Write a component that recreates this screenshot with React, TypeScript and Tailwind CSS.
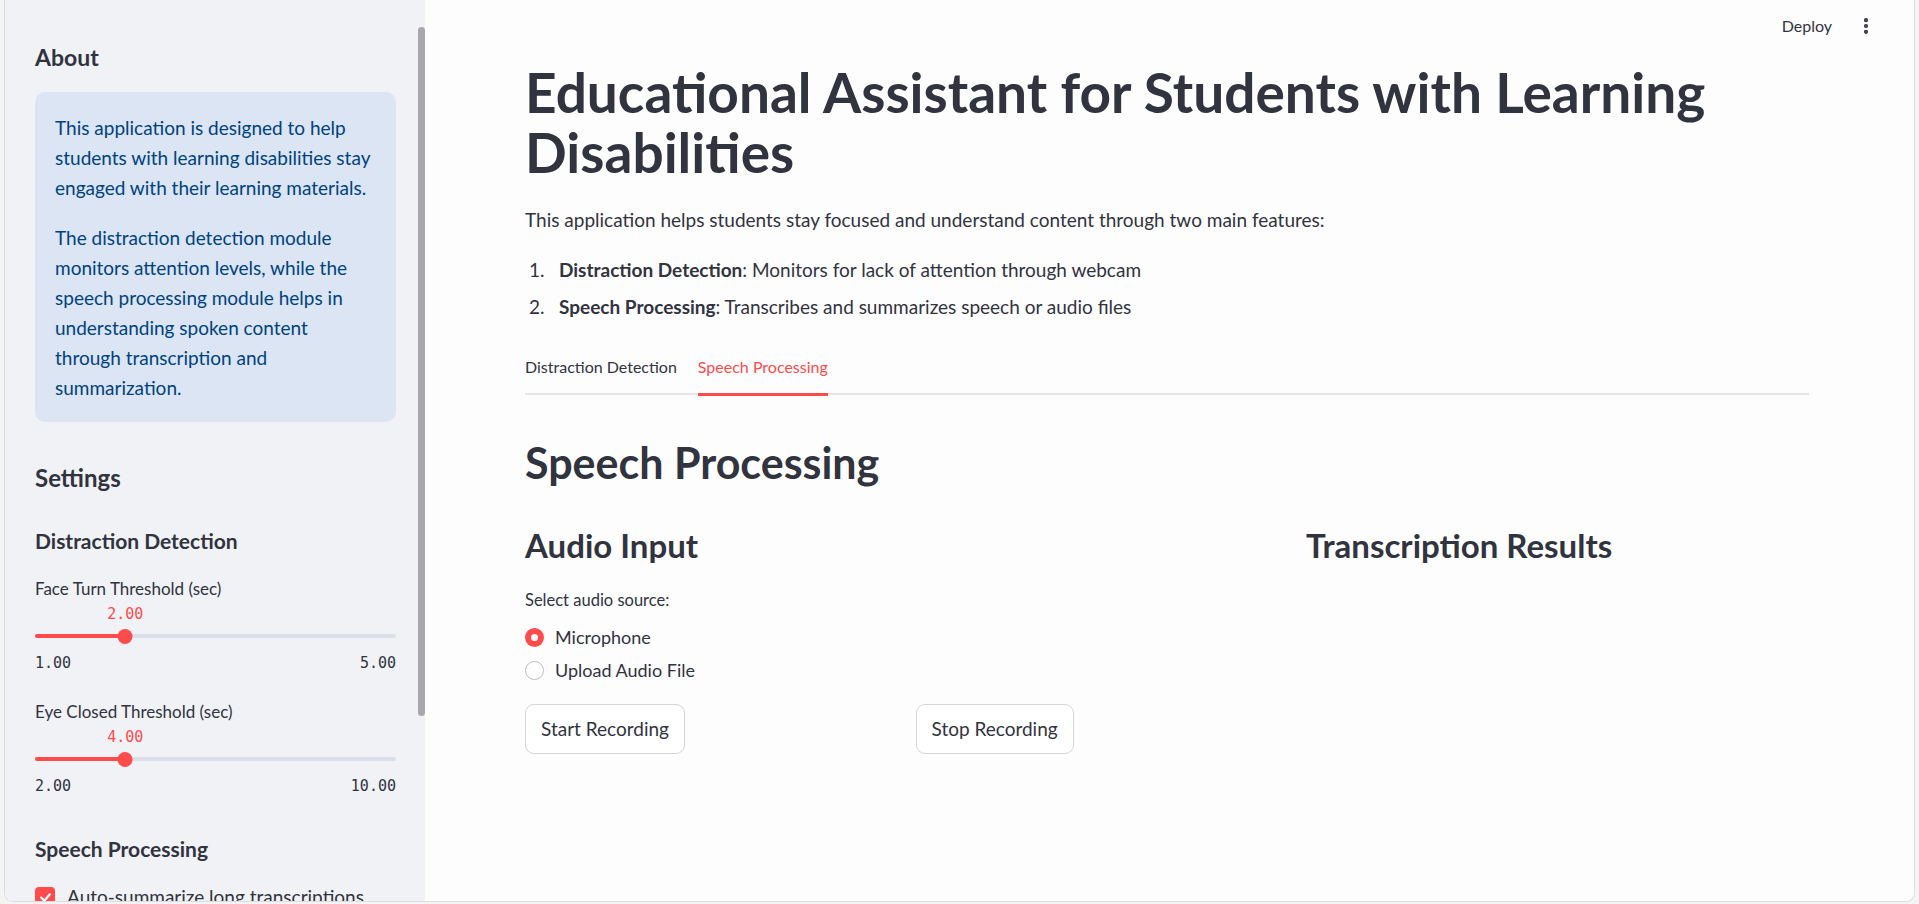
import React from 'react';
import { EllipsisVertical } from 'lucide-react';

const sans = { fontFamily: 'Lato, "Noto Sans", sans-serif' };

function Slider({ label, value, min, max, pct }: { label: string; value: string; min: string; max: string; pct: number }) {
  return (
    <div>
      <div className="text-[17px] leading-[24px] text-[#31333f]">{label}</div>
      <div className="relative mt-[3px] h-[20px] font-['DejaVu_Sans_Mono',monospace] text-[15px] leading-[20px] text-[#ff4b4b]">
        <span className="absolute -translate-x-1/2" style={{ left: `${pct}%` }}>{value}</span>
      </div>
      <div className="relative h-[24px]">
        <div className="absolute left-0 right-0 top-[10px] h-[4px] rounded-full bg-[#dadfe9]" />
        <div className="absolute left-0 top-[10px] h-[4px] rounded-full bg-[#ff4b4b]" style={{ width: `${pct}%` }} />
        <div
          className="absolute top-[5px] h-[15px] w-[15px] -translate-x-1/2 rounded-full bg-[#ff4b4b]"
          style={{ left: `${pct}%` }}
        />
      </div>
      <div className="mt-[5px] flex justify-between font-['DejaVu_Sans_Mono',monospace] text-[15px] leading-[20px] text-[#31333f]">
        <span>{min}</span>
        <span>{max}</span>
      </div>
    </div>
  );
}

function Sidebar() {
  return (
    <aside className="relative h-full w-[420px] shrink-0 overflow-hidden bg-[#f0f2f6] text-[#31333f]">
      <div className="absolute right-0 top-[27px] h-[689px] w-[7px] rounded-full bg-[#a7a7ad]" />
      <div className="ml-[30px] w-[361px] pt-[42px]">
        <h3 className="text-[23px] font-bold leading-[30px]">About</h3>
        <div className="mt-[20px] rounded-[10px] bg-[#dbe5f3] px-[20px] pb-[19px] pt-[21px] text-[19px] leading-[30px] text-[#004280]">
          <p>
            This application is designed to help<br />
            students with learning disabilities stay<br />
            engaged with their learning materials.
          </p>
          <p className="mt-[20px]">
            The distraction detection module<br />
            monitors attention levels, while the<br />
            speech processing module helps in<br />
            understanding spoken content<br />
            through transcription and<br />
            summarization.
          </p>
        </div>
        <h3 className="mt-[41px] text-[24px] font-bold leading-[30px]">Settings</h3>
        <h4 className="mt-[34px] text-[21px] font-bold leading-[28px]">Distraction Detection</h4>
        <div className="mt-[22px]">
          <Slider label="Face Turn Threshold (sec)" value="2.00" min="1.00" max="5.00" pct={25} />
        </div>
        <div className="mt-[27px]">
          <Slider label="Eye Closed Threshold (sec)" value="4.00" min="2.00" max="10.00" pct={25} />
        </div>
        <h4 className="mt-[39px] text-[21px] font-bold leading-[28px]">Speech Processing</h4>
        <div className="mt-[22px] flex items-center gap-[12px]">
          <div className="flex h-[20px] w-[20px] shrink-0 items-center justify-center rounded-[4px] bg-[#ff4b4b]">
            <svg width="13" height="13" viewBox="0 0 24 24" fill="none" stroke="white" strokeWidth="4" strokeLinecap="round" strokeLinejoin="round">
              <polyline points="4 12 10 18 20 6" />
            </svg>
          </div>
          <span className="whitespace-nowrap text-[19px] leading-[24px]">Auto-summarize long transcriptions</span>
        </div>
      </div>
    </aside>
  );
}

function Radio({ label, checked }: { label: string; checked?: boolean }) {
  return (
    <div className="flex h-[28px] items-center gap-[11px]">
      {checked ? (
        <div className="flex h-[19px] w-[19px] items-center justify-center rounded-full bg-[#ff4b4b]">
          <div className="h-[7px] w-[7px] rounded-full bg-white" />
        </div>
      ) : (
        <div className="h-[19px] w-[19px] rounded-full border border-[#bdbdc2] bg-white" />
      )}
      <span className="text-[18px] text-[#31333f]">{label}</span>
    </div>
  );
}

function Button({ children }: { children: React.ReactNode }) {
  return (
    <button className="h-[50px] rounded-[9px] border border-[#d5d6da] bg-white px-[15px] text-[19px] text-[#31333f]">
      {children}
    </button>
  );
}

export default function App() {
  return (
    <div className="flex h-[904px] w-[1919px] overflow-hidden bg-[#f4f4f4] px-[4px] pb-[2px]" style={sans}>
      <div className="flex flex-1 overflow-hidden rounded-b-[9px] border-x border-b border-[#dddddf] bg-[#fdfdfd]">
        <Sidebar />
        <main className="flex-1 text-[#31333f]">
          <header className="flex h-[52px] items-center justify-end pr-[38px]">
            <span className="text-[16px]">Deploy</span>
            <EllipsisVertical className="ml-[24px] h-[20px] w-[20px]" strokeWidth={3} />
          </header>
          <div className="ml-[100px] mt-[10px] w-[1284px]">
            <h1 className="text-[55px] font-bold leading-[60px]">
              Educational Assistant for Students with Learning Disabilities
            </h1>
            <p className="mt-[23px] text-[19px] leading-[30px]">
              This application helps students stay focused and understand content through two main features:
            </p>
            <ol className="mt-[20px] flex flex-col gap-[7px] text-[19px] leading-[30px]">
              <li className="flex pl-[4px]">
                <span className="w-[30px]">1.</span>
                <span><b>Distraction Detection</b>: Monitors for lack of attention through webcam</span>
              </li>
              <li className="flex pl-[4px]">
                <span className="w-[30px]">2.</span>
                <span><b>Speech Processing</b>: Transcribes and summarizes speech or audio files</span>
              </li>
            </ol>
            <div className="mt-[33px] flex gap-[21px] border-b-2 border-[#e6e6e8] text-[16px] leading-[24px]">
              <div className="pb-[14px]">Distraction Detection</div>
              <div className="-mb-[3px] border-b-[3px] border-[#ff4b4b] pb-[14px] text-[#ff4b4b]">Speech Processing</div>
            </div>
            <h2 className="mt-[43px] text-[43px] font-bold leading-[50px]">Speech Processing</h2>
            <div className="mt-[37px] flex gap-[20px]">
              <div className="w-[761px]">
                <h3 className="text-[33px] font-bold leading-[40px]">Audio Input</h3>
                <div className="mt-[24px] text-[16.5px] leading-[22px]">Select audio source:</div>
                <div className="mt-[12px] flex flex-col gap-[5px]">
                  <Radio label="Microphone" checked />
                  <Radio label="Upload Audio File" />
                </div>
                <div className="mt-[20px] flex gap-[20px]">
                  <div className="flex-1">
                    <Button>Start Recording</Button>
                  </div>
                  <div className="flex-1">
                    <Button>Stop Recording</Button>
                  </div>
                </div>
              </div>
              <div className="flex-1">
                <h3 className="text-[33px] font-bold leading-[40px]">Transcription Results</h3>
              </div>
            </div>
          </div>
        </main>
      </div>
    </div>
  );
}
